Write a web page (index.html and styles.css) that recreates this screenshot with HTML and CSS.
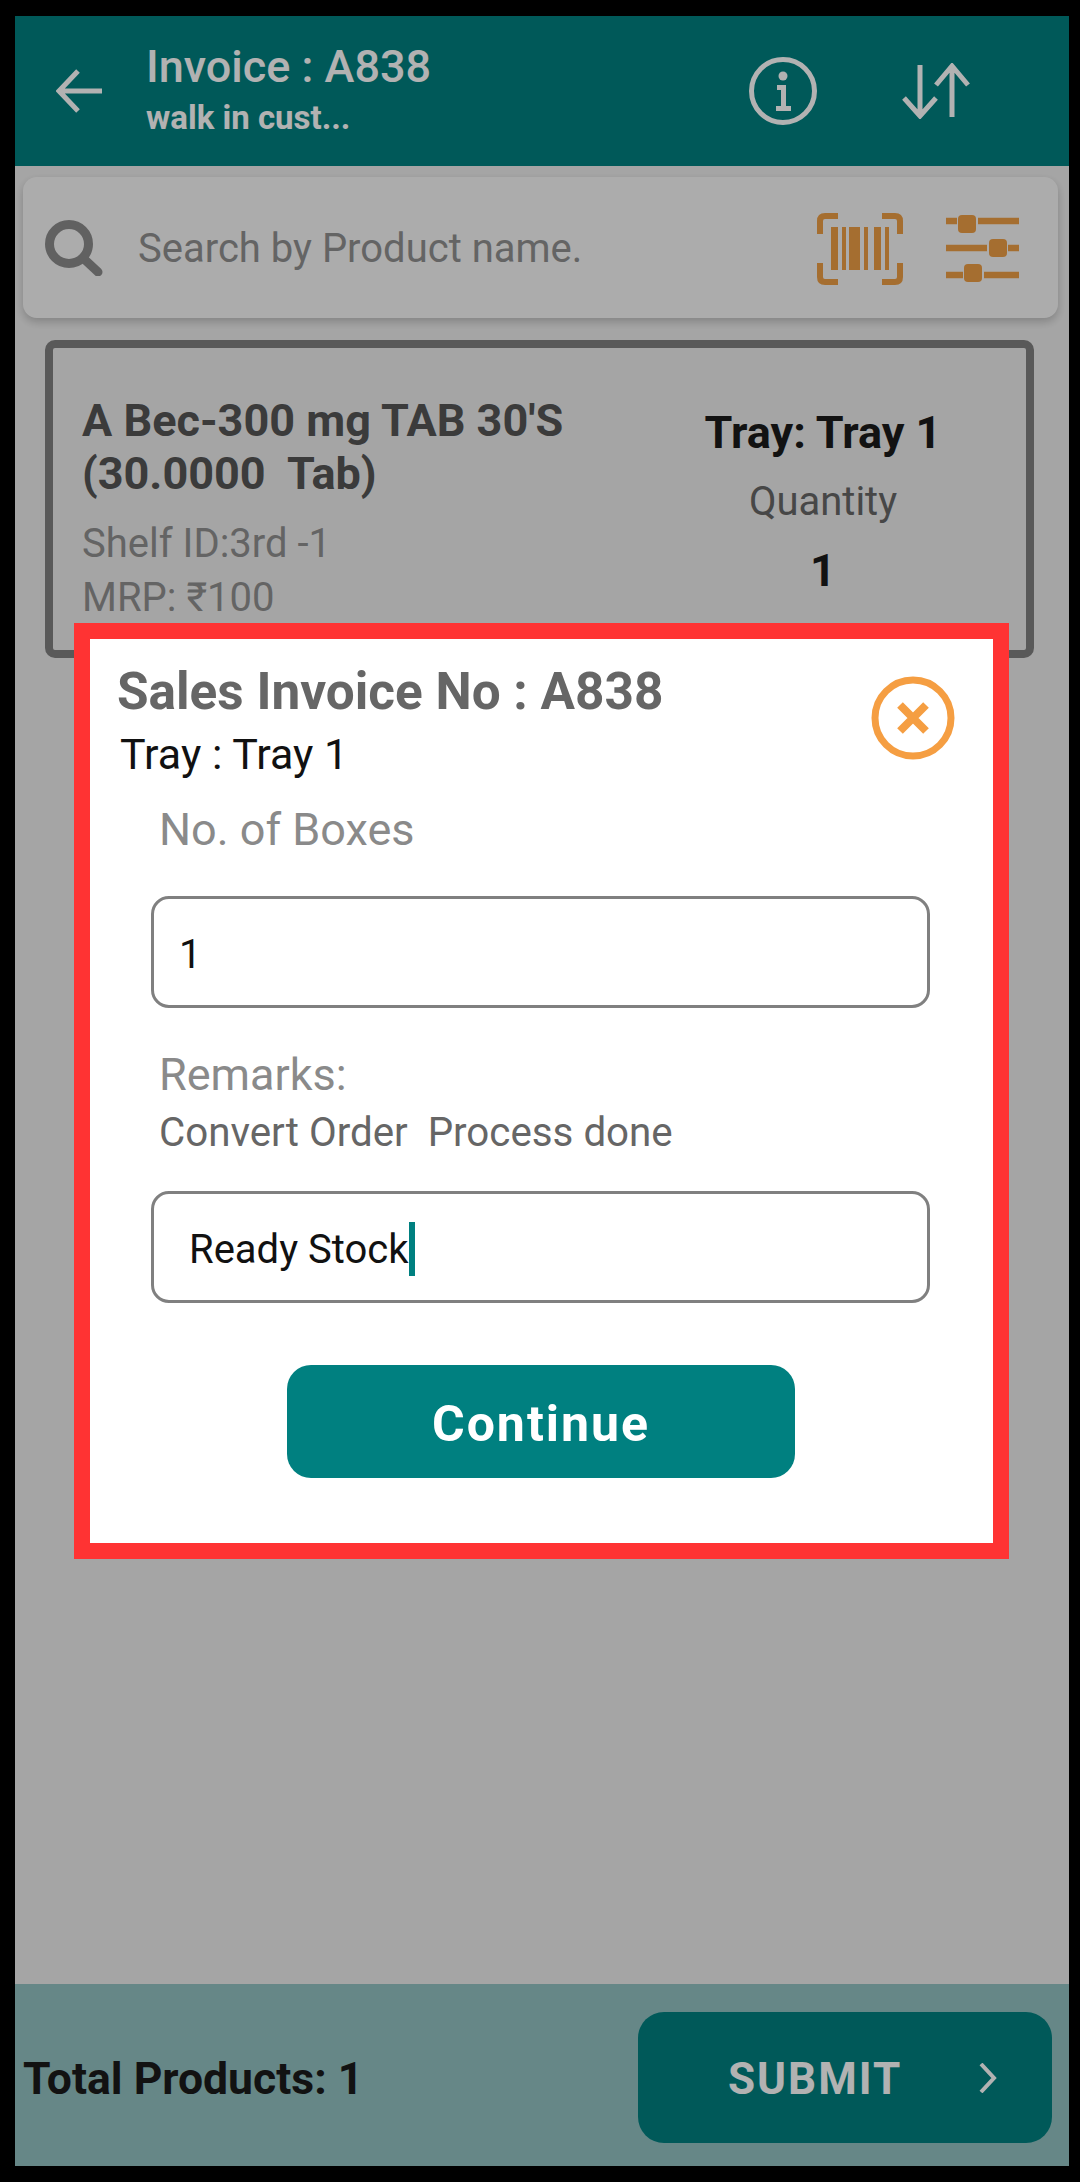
FILE: index.html
```html
<!DOCTYPE html>
<html lang="en">
  <head>
    <meta charset="UTF-8" />
    <meta name="viewport" content="width=device-width, initial-scale=1.0" />
    <title>Invoice A838</title>
    <link rel="stylesheet" href="styles.css">
  </head>
  <body>
    <div class="screen">
      <header class="topbar">
        <svg class="back-icon" viewBox="0 0 46 44" width="46" height="44">
          <path d="M22 2 3 22l19 20M3 22h43" fill="none" stroke="#fff" stroke-width="5"/>
        </svg>
        <div class="topbar-titles">
          <div class="topbar-title">Invoice : A838</div>
          <div class="topbar-sub">walk in cust...</div>
        </div>
        <svg class="info-icon" viewBox="0 0 68 68" width="68" height="68">
          <circle cx="34" cy="34" r="31.5" fill="none" stroke="#fff" stroke-width="5"/>
          <circle cx="34" cy="19" r="4.500" fill="#fff"/>
          <path d="M28 28h9v21h5v5H27v-5h5V33h-4z" fill="#fff"/>
        </svg>
        <svg class="sort-icon" viewBox="0 0 68 56" width="68" height="56">
          <path d="M18 2v50M2 35l16 18 16-18M50 54V4M34 22 50 3l16 19" fill="none" stroke="#fff" stroke-width="5"/>
        </svg>
      </header>

      <div class="searchbar">
        <svg class="search-icon" viewBox="0 0 58 56" width="58" height="56">
          <circle cx="24" cy="24" r="19.5" fill="none" stroke="#8c8c8c" stroke-width="9"/>
          <path d="M38 38 53 52" stroke="#8c8c8c" stroke-width="9" stroke-linecap="round"/>
        </svg>
        <div class="search-placeholder">Search by Product name.</div>
        <svg class="barcode-icon" viewBox="0 0 86 72" width="86" height="72">
          <path d="M3 21V8q0-5 5-5h13M65 3h13q5 0 5 5v13M3 50v14q0 5 5 5h13M65 69h13q5 0 5-5V50" fill="none" stroke="#ed9e45" stroke-width="6"/>
          <path d="M14 14h7v43h-7zM25 14h4v43h-4zM32 14h11v43H32zM47 14h4v43h-4zM57 14h7v43h-7zM68 14h4v43h-4z" fill="#ed9e45"/>
        </svg>
        <svg class="filter-icon" viewBox="0 0 73 67" width="73" height="67">
          <path d="M0 6h11M32 6h41M0 33h41M62 33h11M0 60h17M38 60h35" stroke="#ed9e45" stroke-width="6.500"/>
          <rect x="12" y="0" width="18" height="18" rx="4" fill="#ed9e45"/>
          <rect x="43" y="24" width="18" height="18" rx="4" fill="#ed9e45"/>
          <rect x="18" y="49" width="18" height="18" rx="4" fill="#ed9e45"/>
        </svg>
      </div>

      <main class="content">
        <div class="item-card">
          <div class="item-info">
            <div class="item-name">A Bec-300 mg TAB 30'S<br>(30.0000&nbsp; Tab)</div>
            <div class="item-meta item-shelf">Shelf ID:3rd -1</div>
            <div class="item-meta">MRP: ₹100</div>
          </div>
          <div class="item-tray">
            <div class="tray-name">Tray: Tray 1</div>
            <div class="tray-label">Quantity</div>
            <div class="tray-qty">1</div>
          </div>
        </div>
      </main>

      <footer class="bottombar">
        <div class="total">Total Products: 1</div>
        <div class="submit">
          <span class="submit-text">SUBMIT</span>
          <svg class="submit-arrow" viewBox="0 0 18 30" width="18" height="30">
            <path d="M2 1 15 15 2 29" fill="none" stroke="#fff" stroke-width="4"/>
          </svg>
        </div>
      </footer>

      <div class="overlay">
        <div class="modal">
          <div class="modal-head">
            <div>
              <div class="modal-title">Sales Invoice No : A838</div>
              <div class="modal-tray">Tray : Tray 1</div>
            </div>
            <svg class="close-icon" viewBox="0 0 84 84" width="84" height="84">
              <circle cx="42" cy="42" r="38" fill="none" stroke="#f59e42" stroke-width="7"/>
              <path d="M29 29 55 55M55 29 29 55" stroke="#f59e42" stroke-width="8"/>
            </svg>
          </div>
          <div class="form">
            <div class="field-label">No. of Boxes</div>
            <div class="field field-boxes">1</div>
            <div class="field-label remarks-label">Remarks:</div>
            <div class="remarks-note">Convert Order&nbsp; Process done</div>
            <div class="field field-remarks">Ready Stock<span class="caret"></span></div>
          </div>
          <div class="continue">Continue</div>
        </div>
      </div>
    </div>
  </body>
</html>
```

FILE: styles.css
```css
* {
  box-sizing: border-box;
}
body {
  margin: 0;
  padding: 16px 11px 16px 15px;
  background-color: #000;
  font-family: Roboto, sans-serif;
}
.screen {
  position: relative;
  display: flex;
  flex-direction: column;
  height: 2150px;
  background-color: #ededed;
  overflow: hidden;
}

/* top bar */
.topbar {
  display: flex;
  align-items: center;
  height: 150px;
  flex-shrink: 0;
  padding-left: 41px;
  background-color: #008080;
  color: #fff;
}
.topbar-titles {
  width: 603px;
  margin-left: 44px;
  margin-top: 2px;
}
.topbar-title {
  font-size: 45px;
  font-weight: 500;
  line-height: 52px;
}
.topbar-sub {
  font-size: 33px;
  font-weight: 700;
  line-height: 50px;
}
.sort-icon {
  margin-left: 85px;
}

/* search */
.searchbar {
  display: flex;
  align-items: center;
  height: 141px;
  margin: 11px 11px 0 8px;
  padding-left: 22px;
  border-radius: 14px;
  background-color: #f7f7f7;
  box-shadow: 0 4px 8px rgba(0, 0, 0, 0.2);
}
.search-placeholder {
  width: 679px;
  margin-left: 35px;
  margin-top: 2px;
  font-size: 40px;
  color: #909090;
}
.barcode-icon {
  margin-top: 2px;
}
.filter-icon {
  margin-left: 43px;
  margin-top: 2px;
}

/* product card */
.content {
  flex: 1;
  padding: 22px 35px 0 30px;
}
.item-card {
  display: flex;
  height: 318px;
  padding: 46px 0 0 29px;
  border: 8px solid #808080;
  border-radius: 10px;
}
.item-info {
  width: 598px;
}
.item-name {
  font-size: 45px;
  font-weight: 700;
  line-height: 53px;
  color: #555;
}
.item-meta {
  font-size: 40px;
  line-height: 54px;
  color: #909090;
}
.item-shelf {
  margin-top: 17px;
}
.item-tray {
  width: 286px;
  text-align: center;
}
.tray-name {
  margin-top: 11px;
  font-size: 45px;
  font-weight: 700;
  line-height: 56px;
  color: #1a1a1a;
}
.tray-label {
  margin-top: 14px;
  font-size: 40px;
  line-height: 54px;
  color: #666;
}
.tray-qty {
  margin-top: 15px;
  font-size: 45px;
  font-weight: 700;
  line-height: 54px;
  color: #1a1a1a;
}

/* bottom bar */
.bottombar {
  display: flex;
  align-items: center;
  justify-content: space-between;
  height: 182px;
  flex-shrink: 0;
  padding: 5px 17px 0 8px;
  background-color: #93c2c2;
}
.total {
  margin-top: 2px;
  font-size: 44.500px;
  font-weight: 700;
  color: #1a1a1a;
}
.submit {
  display: flex;
  align-items: center;
  width: 414px;
  height: 131px;
  padding-left: 90px;
  border-radius: 26px;
  background-color: #008080;
  color: #fff;
}
.submit-text {
  width: 251px;
  margin-top: 2px;
  font-size: 44px;
  font-weight: 700;
  letter-spacing: 2px;
}

/* modal */
.overlay {
  position: absolute;
  inset: 0;
  display: flex;
  align-items: center;
  justify-content: center;
  background-color: rgba(0, 0, 0, 0.3);
}
.modal {
  display: flex;
  flex-direction: column;
  width: 935px;
  height: 936px;
  margin-right: 1px;
  padding: 23px 28px 0 27px;
  border: 16px solid #ff3333;
  background-color: #fff;
}
.modal-head {
  display: flex;
  justify-content: space-between;
}
.modal-title {
  font-size: 51.300px;
  font-weight: 700;
  line-height: 60px;
  color: #666;
}
.modal-tray {
  margin: 5px 0 0 3px;
  font-size: 43px;
  line-height: 54px;
  color: #111;
}
.close-icon {
  margin: 14px 10px 0 0;
}
.form {
  margin-top: 22px;
  padding: 0 35px 0 34px;
}
.field-label {
  margin-left: 8px;
  font-size: 45px;
  line-height: 54px;
  color: #8a8a8a;
}
.field {
  display: flex;
  align-items: center;
  height: 112px;
  padding-top: 4px;
  border: 3px solid #808080;
  border-radius: 18px;
  font-size: 40px;
  color: #111;
}
.field-boxes {
  margin-top: 39px;
  padding-left: 25px;
}
.field-remarks {
  margin-top: 33px;
  padding-left: 35px;
}
.remarks-label {
  margin-top: 40px;
}
.remarks-note {
  margin: 6px 0 0 8px;
  font-size: 40.300px;
  line-height: 50px;
  color: #666;
}
.caret {
  width: 6px;
  height: 54px;
  background-color: #008080;
}
.continue {
  width: 508px;
  height: 113px;
  margin: 62px auto 0;
  border-radius: 24px;
  background-color: #008080;
  font-size: 50px;
  font-weight: 700;
  letter-spacing: 2px;
  line-height: 119px;
  text-align: center;
  color: #fff;
}
```
